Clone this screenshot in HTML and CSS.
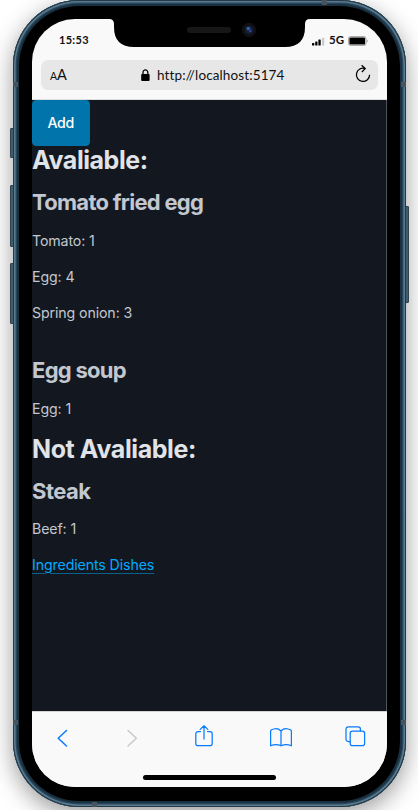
FILE: index.html
```
<!DOCTYPE html>
<html lang="en">
<head>
<meta charset="utf-8">
<meta name="viewport" content="width=device-width, initial-scale=1">
<title>Dishes</title>
<link rel="stylesheet" href="styles.css">
</head>
<body>
<div class="device">
  <i class="key mute"></i><i class="key up"></i><i class="key down"></i><i class="key power"></i>
  <div class="frame">
    <i class="band b1"></i><i class="band b2"></i><i class="band b3"></i><i class="band b4"></i><i class="band b5"></i><i class="band b6"></i>
    <div class="bezel">
      <div class="screen">
        <header class="top">
          <div class="status">
            <span class="time">15:53</span>
            <div class="signal">
              <svg width="13" height="9" viewBox="0 0 13 9"><rect x="0" y="6" width="2.3" height="2.5" rx=".5"/><rect x="3.2" y="4.6" width="2.3" height="3.9" rx=".5"/><rect x="6.4" y="2.6" width="2.3" height="5.9" rx=".5"/><rect x="10" y=".7" width="2.3" height="7.8" rx=".5" fill="#ccc"/></svg>
              <span class="net">5G</span>
              <svg width="20" height="10" viewBox="0 0 20 10"><rect x=".5" y=".5" width="17.5" height="9" rx="2" fill="none" stroke="#aaa"/><rect x="1.4" y="1.4" width="15.7" height="7.2" rx="1.2"/><path d="M18.7 3.3q1 .5 1 1.7t-1 1.7z" fill="#999"/></svg>
            </div>
          </div>
          <div class="address">
            <span class="aa"><small>A</small>A</span>
            <div class="url"><svg width="9" height="12" viewBox="0 0 9 12"><rect x=".2" y="5" width="8.4" height="7" rx="1"/><path d="M2 5.5V3.3a2.4 2.4 0 0 1 4.8 0v2.2" fill="none" stroke="#000" stroke-width="1.3"/></svg><span>http://localhost:5174</span></div>
            <svg class="reload" width="16" height="19" viewBox="0 0 16 19" fill="none" stroke="#000" stroke-width="1.3"><path d="M10.2 4.6A6.6 6.6 0 1 0 14.6 10.8"/><path d="M6.6 1.2L10.2 4.6 6.9 8"/></svg>
          </div>
        </header>
        <main class="page">
          <button class="add">Add</button>
          <h2>Avaliable:</h2>
          <section class="dish first"><h3>Tomato fried egg</h3><p>Tomato: 1</p><p>Egg: 4</p><p>Spring onion: 3</p></section>
          <section class="dish"><h3>Egg soup</h3><p>Egg: 1</p></section>
          <h2 class="not">Not Avaliable:</h2>
          <section class="dish last"><h3>Steak</h3><p>Beef: 1</p></section>
          <nav class="links"><a>Ingredients Dishes</a></nav>
        </main>
        <footer class="toolbar">
          <div class="tools">
            <svg width="24" height="26" viewBox="0 0 24 26"><path d="M14.5 5.5L6.2 13.2l8.3 7.8"/></svg>
            <svg class="off" width="24" height="26" viewBox="0 0 24 26"><path d="M8 5.5l8.4 7.7L8 21"/></svg>
            <svg class="thin" width="24" height="26" viewBox="0 0 24 26"><path d="M8.5 6.6H6a2.2 2.2 0 0 0-2.2 2.2v9.6A2.2 2.2 0 0 0 6 20.6h12a2.2 2.2 0 0 0 2.2-2.2V8.8A2.2 2.2 0 0 0 18 6.6h-2.5M12 14V.8M8.2 4.4L12 .8l3.8 3.6"/></svg>
            <svg class="thin book" width="24" height="26" viewBox="0 0 24 26"><path d="M12 6Q9 2.9 4.8 4q-3.2.7-3.2 2v14.8q5.4-2.5 10.4 0V6q3-3.1 7.2-2 3.2.7 3.2 2v14.8q-5.4-2.5-10.4 0"/></svg>
            <svg class="thin" width="24" height="26" viewBox="0 0 24 26"><path d="M7 16.5H5.2A2.2 2.2 0 0 1 3 14.3V4.1a2.2 2.2 0 0 1 2.2-2.2h10a2.2 2.2 0 0 1 2.2 2.2v1.8"/><rect x="7.2" y="6.1" width="14.4" height="14.5" rx="2.2"/></svg>
          </div>
          <i class="home"></i>
        </footer>
      </div>
      <svg class="notch" width="203" height="30" viewBox="0 0 203 30"><path d="M0 0H203V1H202Q197 1 197 6V9Q197 29 177 29H26Q6 29 6 9V6Q6 1 1 1H0z"/><rect x="79" y="9" width="44" height="6" rx="3" fill="#171717"/><circle cx="141" cy="12" r="7.2" fill="#101014"/><circle cx="141" cy="12" r="4" fill="#13213f"/><circle cx="140.3" cy="10.5" r="1.8" fill="#355d9e"/><circle cx="142.3" cy="13" r="1.2" fill="#413d90"/></svg>
    </div>
  </div>
</div>
</body>
</html>
```
FILE: styles.css
```
* { box-sizing: border-box; }
html, body { margin: 0; height: 810px; overflow: hidden; background: #fff; }
body { font-family: Inter, "Liberation Sans", sans-serif; }
.device { position: relative; width: 393px; height: 807px; margin-left: 13px; }
.frame {
  position: relative; height: 807px; padding: 6px; border-radius: 66px;
  background: #284456;
  box-shadow: inset 0 0 0 1px #243845, inset 0 0 0 2.6px #587b91, inset 0 0 0 4px #294557, inset 0 0 0 6px #193040, 0 7px 23px rgba(0,0,0,.4);
}
.bezel { position: relative; height: 795px; padding: 13px; border-radius: 60px; background: #000; }
.screen { display: flex; flex-direction: column; height: 768px; width: 355px; border-radius: 43px; overflow: hidden; background: #f9f9f9; }
.notch { position: absolute; left: 89px; top: 12px; }
.key { position: absolute; background: #54717f; border: 1px solid #38515f; border-radius: 1px; width: 4px; }
.mute { left: -3px; top: 128px; height: 30px; }
.up { left: -3px; top: 185px; height: 62px; }
.down { left: -3px; top: 263px; height: 61px; }
.power { right: -3px; top: 206px; height: 97px; }
.band { position: absolute; background: #47545d; z-index: 1; }
.b1, .b2, .b5, .b6 { width: 5px; height: 5px; }
.b1 { left: 0; top: 82px; }
.b2 { right: 0; top: 82px; }
.b3 { right: 79px; top: 0; width: 5px; height: 5px; }
.b4 { left: 79px; bottom: 0; width: 5px; height: 5px; }
.b5 { left: 0; top: 720px; }
.b6 { right: 0; top: 720px; }
.top { height: 81px; flex: none; border-bottom: 1px solid #dedede; font-family: Lato, "Liberation Sans", sans-serif; color: #111; }
.status { height: 41px; display: flex; justify-content: space-between; padding: 12px 19px 0 27px; font-weight: 700; }
.time { font-size: 11px; line-height: 18px; letter-spacing: .3px; }
.signal { display: flex; align-items: center; height: 18px; }
.signal svg { margin-top: 2px; }
.net { margin: 0 4px; font-size: 11.5px; line-height: 18px; }
.address { display: flex; align-items: center; height: 30px; margin: 0 9px; padding: 0 7px 0 9px; border-radius: 7px; background: #e7e7e7; }
.aa { width: 91px; font-size: 14.5px; line-height: 30px; }
.aa small { font-size: 10.5px; }
.url { flex: 1; display: flex; align-items: center; gap: 7px; font-size: 13.5px; line-height: 30px; letter-spacing: .12px; white-space: nowrap; }
.reload { margin-top: -3px; }
.page { flex: none; height: 611px; background: #13171f; border-right: 1px solid #50545b; color: #c2c7d0; }
.add { display: block; width: 57.5px; height: 45.5px; padding: 0; border: 1px solid #0074ab; border-radius: 4px; background: #0074ab; color: #fff; font: 500 14.2px/44px Inter, sans-serif; letter-spacing: -.3px; }
h2, h3, p { margin: 0; white-space: nowrap; }
h2 { margin-top: -1px; margin-bottom: 1px; font-size: 25px; line-height: 30px; font-weight: 700; letter-spacing: -.45px; color: #e0e3e7; }
.not { margin: 0; letter-spacing: -.4px; }
h3 { font-size: 22px; line-height: 28px; font-weight: 700; letter-spacing: -.73px; color: #c2c7d0; }
.dish { padding-top: 12.5px; }
.dish p { font-size: 14.2px; line-height: 22px; margin-bottom: 14px; letter-spacing: -.12px; }
.dish h3 { margin-bottom: 14px; }
.dish.first { height: 168px; }
.dish.last h3 { margin-bottom: 13px; letter-spacing: -.5px; }
.links { font-size: 14.2px; line-height: 22px; letter-spacing: -.12px; }
.links a { color: #01aaff; text-decoration: underline; text-decoration-color: #08608d; text-underline-offset: 3px; text-decoration-thickness: 1px; }
.toolbar { flex: 1; border-top: 1px solid #d4d4d4; background: #f9f9f9; }
.tools { display: grid; grid-template-columns: 70px 72px 76px 75px 24px; padding: 13px 0 0 20px; }
.tools svg { fill: none; stroke: #087bff; stroke-width: 1.5; stroke-linecap: round; stroke-linejoin: round; }
.tools .off { stroke: #c9c9c9; margin-left: -2px; }
.tools .thin { stroke-width: 1.25; margin-left: -2px; }
.tools .book { margin-left: -1.5px; }
.home { display: block; width: 133px; height: 5px; margin: 24px auto 0; border-radius: 3px; background: #000; }
```
